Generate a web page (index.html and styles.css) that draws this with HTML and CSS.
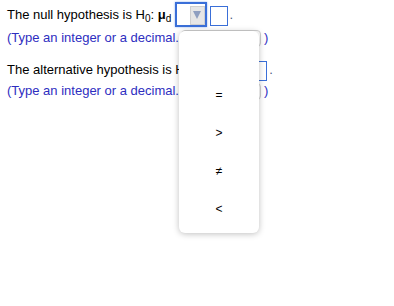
FILE: index.html
```html
<html>
<head>
    <link rel="stylesheet" href="styles.css">
</head>
<body>
    <div class="question">
        <div class="line first">
            The null hypothesis is H<sub>0</sub>: <b class="mu">μ</b><sub class="d">d</sub>
            <span class="select focused"><span class="select-btn"><span class="arrow"></span></span></span>
            <span class="answer"></span><span class="dot">.</span>
        </div>
        <div class="line hint">
            (Type an integer or a decimal.<span class="answer wide"></span>)
        </div>

        <div class="line second">
            The alternative hypothesis is H<sub>a</sub>: <b class="mu">μ</b><sub class="d">d</sub>
            <span class="select"><span class="select-btn"><span class="arrow"></span></span></span>
            <span class="answer"></span><span class="dot">.</span>
        </div>
        <div class="line hint">
            (Type an integer or a decimal.<span class="answer wide"></span>)
        </div>
    </div>

    <!-- open dropdown for the first select -->
    <ul class="dropdown">
        <li></li>
        <li>=</li>
        <li>&gt;</li>
        <li>≠</li>
        <li>&lt;</li>
    </ul>
</body>
</html>
```

FILE: styles.css
```css
body {
    margin: 0;
    background: #fff;
    font-family: "Liberation Sans", Arial, sans-serif;
    font-size: 13px;
    color: #000;
}

.question {
    padding: 2px 0 0 7px;
}

.line {
    height: 18px;
    line-height: 18px;
    white-space: nowrap;
}

.line.first {
    height: 27px;
    line-height: 25px;
}

.line.second {
    height: 25px;
    line-height: 25px;
    margin-top: 10px;
}

.hint {
    color: #2e2ebf;
}

sub {
    font-size: 10px;
    vertical-align: -3px;
    line-height: 0;
}

.mu {
    font-weight: bold;
}

.select {
    display: inline-block;
    vertical-align: top;
    box-sizing: border-box;
    width: 32px;
    height: 25px;
    border: 1px solid #3a6fd8;
    background: #fff;
    position: relative;
}

.select.focused {
    border: 2px solid #3a6fd8;
    box-shadow: 0 0 2px #8fb0ee;
}

.select-btn {
    position: absolute;
    right: 0;
    top: 2px;
    bottom: 0;
    width: 15px;
    background: #e6e6e6;
    border: 1px solid #cfcfcf;
    box-sizing: border-box;
}

.arrow {
    position: absolute;
    left: 2px;
    top: 4px;
    border-left: 4px solid transparent;
    border-right: 4px solid transparent;
    border-top: 8px solid #8f9fc0;
}

.answer {
    display: inline-block;
    box-sizing: border-box;
    width: 18px;
    height: 20px;
    border: 1.5px solid #3a6fd8;
    vertical-align: middle;
    margin-left: -1px;
}

.answer.wide {
    width: 80px;
    height: 17px;
    border: 1px solid #cfcfcf;
    border-radius: 4px;
    margin: 0 3px 0 2px;
}

.dot {
    color: #4a5a80;
    margin-left: 2px;
}

.dropdown {
    position: absolute;
    left: 179px;
    top: 31px;
    width: 80px;
    margin: 0;
    padding: 7px 0 5px;
    list-style: none;
    background: #fff;
    border-radius: 6px;
    box-shadow: 0 1px 6px rgba(0, 0, 0, 0.25);
}

.dropdown li {
    height: 38px;
    line-height: 38px;
    text-align: center;
    font-size: 12px;
}
```
